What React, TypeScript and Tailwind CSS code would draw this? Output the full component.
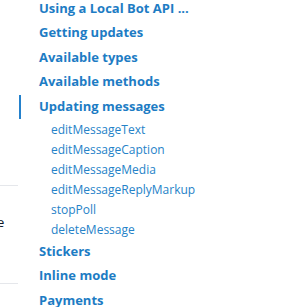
const sections = [
  "Using a Local Bot API ...",
  "Getting updates",
  "Available types",
  "Available methods",
];

const methods = [
  "editMessageText",
  "editMessageCaption",
  "editMessageMedia",
  "editMessageReplyMarkup",
  "stopPoll",
  "deleteMessage",
];

const after = ["Stickers", "Inline mode", "Payments"];

export default function App() {
  return (
    <div
      className="w-[286px] h-[307px] overflow-hidden bg-white flex"
      style={{ fontFamily: '"Open Sans", sans-serif' }}
    >
      {/* left edge of the page content */}
      <div className="w-[19px] shrink-0 flex flex-col">
        <div className="mt-[185px] w-[18px] h-px bg-gray-200" />
        <div className="mt-[28px] -ml-[3px] text-[13px] leading-[16px] text-gray-900">e</div>
        <div className="mt-[53px] w-[18px] h-px bg-gray-200" />
      </div>

      {/* sidebar */}
      <div className="flex-1 -mt-[4px]">
        <ul className="pl-[20px]">
          {sections.map((s) => (
            <li key={s} className="h-[24.5px] flex items-center text-[13px] font-bold text-[#1d7cc4]">
              {s}
            </li>
          ))}
        </ul>
        <div className="mt-[1px] border-l-2 border-[#2481cc] pl-[18px]">
          <div className="h-[24px] flex items-center text-[13px] font-bold text-[#1d7cc4]">
            Updating messages
          </div>
        </div>
        <ul className="mt-[1px] pl-[32px]">
          {methods.map((m) => (
            <li key={m} className="h-[20px] flex items-center text-[12px] text-[#2582c8]">
              {m}
            </li>
          ))}
        </ul>
        <ul className="-mt-[1px] pl-[20px]">
          {after.map((s) => (
            <li key={s} className="h-[24.5px] flex items-center text-[13px] font-bold text-[#1d7cc4]">
              {s}
            </li>
          ))}
        </ul>
      </div>
    </div>
  );
}
